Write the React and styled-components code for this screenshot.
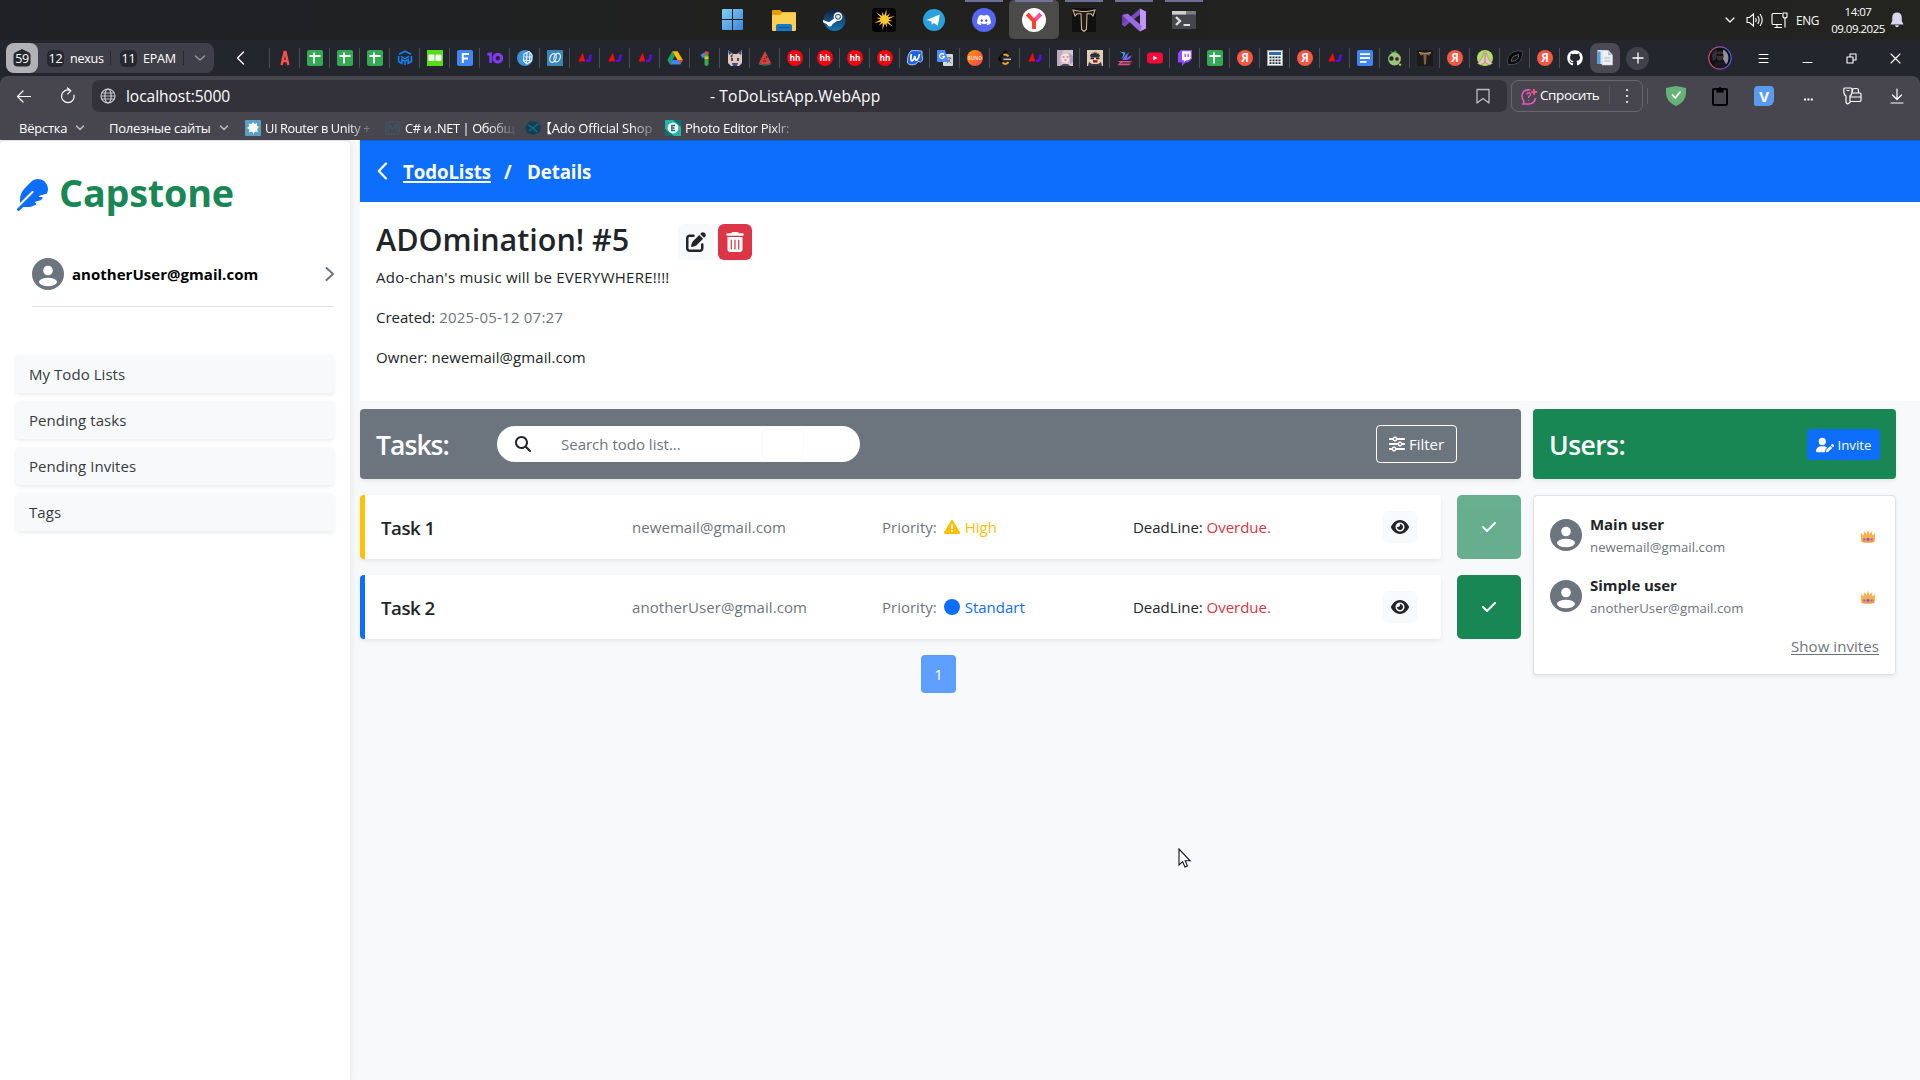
import React from "react";
import styled, { createGlobalStyle, css } from "styled-components";
import {
  FaFeather,
  FaPenToSquare,
  FaTrashCan,
  FaSliders,
  FaEye,
  FaCheck,
  FaUserPen,
  FaTriangleExclamation,
  FaCircle,
  FaMagnifyingGlass,
  FaDiscord,
  FaGithub,
} from "react-icons/fa6";

const FONT = `"Open Sans", "Noto Sans", "Noto Sans CJK JP", sans-serif`;

const Global = createGlobalStyle`
  * { box-sizing: border-box; }
  html, body { margin: 0; padding: 0; }
  body { font-family: ${FONT}; font-size: 15px; line-height: 24px; color: #212529; background: #f8f9fa; overflow: hidden; }
  svg { display: block; flex: none; }
  button { font-family: inherit; border: 0; padding: 0; }
`;

const Screen = styled.div`
  width: 1920px;
  height: 1080px;
  display: flex;
  flex-direction: column;
  overflow: hidden;
`;

/* ---------- system taskbar ---------- */

const Taskbar = styled.div`
  height: 40px;
  flex: none;
  display: flex;
  background: linear-gradient(90deg, #202126, #20211f 40%, #232420);
  padding-left: 707px;
  color: #fff;
`;

const AppCell = styled.div`
  width: 50px;
  height: 39px;
  display: flex;
  align-items: center;
  justify-content: center;
  border-radius: 5px;
  padding-top: 1px;
  ${(p) =>
    p.$first &&
    css`
      width: 52px;
      padding: 0 1px 0 0;
    `}
  ${(p) =>
    p.$running &&
    css`
      background: linear-gradient(#72709b, #72709b) center top / 38px 2px no-repeat;
    `}
  ${(p) => p.$active && "background-color: #4b4b4a;"}
`;

const Tray = styled.div`
  margin-left: auto;
  padding-right: 16px;
  display: flex;
  align-items: center;
  font-size: 12px;
`;

const TrayIcon = styled.span`
  margin-right: ${(p) => p.$gap || 0}px;
`;

const Lang = styled.span`
  width: 34px;
  font-size: 11.8px;
  letter-spacing: -0.3px;
`;

const Clock = styled.div`
  width: 56px;
  margin-right: 4px;
  text-align: center;
  font-size: 11.5px;
  line-height: 17px;
  letter-spacing: -0.5px;
  white-space: nowrap;
`;

/* ---------- browser chrome ---------- */

const TabStrip = styled.div`
  height: 36px;
  flex: none;
  background: #24262e;
  display: flex;
  align-items: center;
  padding-left: 6px;
  color: #fff;
`;

const GroupBox = styled.div`
  width: 208px;
  height: 30px;
  flex: none;
  border-radius: 8px;
  background: #3f3f49;
  display: flex;
  align-items: center;
  font-size: 12.6px;
  letter-spacing: -0.3px;
`;

const GroupHome = styled.div`
  width: 32px;
  height: 30px;
  flex: none;
  border-radius: 8px;
  background: #b2b2b6;
  display: flex;
  align-items: center;
  justify-content: center;
`;

const CountBadge = styled.span`
  width: 17px;
  height: 17px;
  flex: none;
  border-radius: 5px;
  background: #262830;
  line-height: 17px;
  text-align: center;
  margin-right: 6px;
`;

const GroupTab = styled.div`
  display: flex;
  flex: none;
  align-items: center;
  width: 64px;
  height: 14px;
  margin-left: 9px;
  line-height: 17px;
  border-right: 1px solid #27282f;
`;

const GroupMore = styled.div`
  padding-left: 10px;
`;

const BackCell = styled.div`
  width: 56px;
  flex: none;
  padding-left: 22px;
`;

const Tab = styled.div`
  width: 30px;
  height: ${(p) => (p.$active ? 30 : 20)}px;
  flex: none;
  display: flex;
  align-items: center;
  justify-content: center;
  box-shadow: ${(p) => (p.$active ? "none" : "-1px 0 0 #4b4c54")};
  background: ${(p) => (p.$active ? "#4a4954" : "transparent")};
  border-radius: ${(p) => (p.$active ? "8px" : "0")};
`;

const PlusButton = styled.div`
  width: 23px;
  height: 23px;
  margin-left: 6px;
  border-radius: 50%;
  background: #41414b;
  display: flex;
  align-items: center;
  justify-content: center;
`;

const WindowControls = styled.div`
  margin-left: auto;
  display: flex;
  padding-right: 3px;
`;

const ControlCell = styled.div`
  width: ${(p) => p.$w || 44}px;
  display: flex;
  align-items: center;
  justify-content: center;
`;

const ProfileCell = styled(ControlCell)`
  width: 24px;
  margin-right: 9px;
`;

const ToolbarArea = styled.div`
  height: 64px;
  flex: none;
  background: #47464f;
  color: #fff;
  border-radius: 8px 8px 0 0;
  box-shadow: 0 -8px 0 8px #24262e;
  clip-path: inset(-1px 0 0 0);
`;

const AddressRow = styled.div`
  display: flex;
  align-items: center;
  height: 36px;
  padding-top: 4px;
`;

const NavCell = styled.div`
  width: ${(p) => p.$w}px;
  display: flex;
  padding-left: ${(p) => p.$pl}px;
`;

const AddressField = styled.div`
  width: 1415px;
  height: 32px;
  border-radius: 7px;
  background: #33323b;
  display: grid;
  grid-template-columns: 26px 584px 1fr 31px;
  align-items: center;
  padding-left: 8px;
  font-size: 15.6px;
  letter-spacing: -0.07px;
  white-space: nowrap;
`;

const PageTitle = styled.span`
  letter-spacing: 0.15px;
`;

const AskButton = styled.div`
  width: 132px;
  height: 32px;
  margin-left: 4px;
  border: 1px solid #67666f;
  border-radius: 7px;
  display: flex;
  align-items: center;
  padding-left: 9px;
  font-size: 13.5px;
  letter-spacing: -0.4px;
`;

const AskText = styled.span`
  width: 70px;
  margin: 0 0 2px 3px;
  border-right: 1px solid #5a5963;
  line-height: 18px;
`;

const Dots = styled.div`
  margin-left: 16px;
  width: 2px;
  height: 14px;
  background: repeating-linear-gradient(#d5d5d8 0 2px, transparent 2px 6px);
`;

const VLine = styled.div`
  width: 1px;
  height: 16px;
  margin-left: 4px;
  background: #66656f;
`;

const Extensions = styled.div`
  display: flex;
  align-items: center;
  margin-left: 6px;
`;

const VBadge = styled.div`
  width: 20px;
  height: 20px;
  border-radius: 4px 4px 6px 2px;
  background: #5a9bee;
  font-weight: 700;
  font-size: 15px;
  line-height: 20px;
  text-align: center;
`;

const BookmarkRow = styled.div`
  height: 28px;
  display: grid;
  grid-template-columns: 90px 136px 140px 140px 140px 150px;
  align-items: center;
  padding: 4px 0 0 19px;
  font-size: 13px;
  letter-spacing: -0.25px;
  white-space: nowrap;
  line-height: 20px;
`;

const Bookmark = styled.div`
  display: flex;
  align-items: center;
  gap: ${(p) => (p.$gap === undefined ? 8 : p.$gap)}px;
`;

const FadeText = styled.span`
  width: ${(p) => p.$w}px;
  font-size: ${(p) => p.$fs || 12.8}px;
  letter-spacing: ${(p) => p.$ls || -0.4}px;
  text-indent: ${(p) => p.$indent || 0}px;
  mask-image: linear-gradient(90deg, #000 ${(p) => p.$w - 28}px, transparent ${(p) => p.$w}px);
`;

/* ---------- page ---------- */

const Page = styled.div`
  flex: 1;
  display: flex;
  background: #f8f9fa;
`;

const Sidebar = styled.aside`
  width: 350px;
  background: #fff;
  border-radius: 4px 4px 0 0;
  box-shadow: inset 0 1px 0 rgba(0, 0, 0, 0.12), 0 2px 8px rgba(0, 0, 0, 0.1);
  padding: 33px 16px 0;
`;

const Brand = styled.div`
  height: 42px;
  display: flex;
  align-items: flex-start;
  gap: 11px;
  color: #0d6efd;
  > svg { margin-top: 6px; }
`;

const BrandName = styled.span`
  font-size: 37.8px;
  line-height: 40px;
  font-weight: 700;
  color: #198754;
  letter-spacing: -0.2px;
`;

const Account = styled.div`
  margin: 43px 0 0 16px;
  height: 49px;
  display: flex;
  border-bottom: 1px solid #dee2e6;
  font-weight: 700;
  color: #000;
`;

const AccountArrow = styled.span`
  margin: 8px -1px 0 auto;
`;

const AccountName = styled.span`
  margin-left: 8px;
  line-height: 32px;
  letter-spacing: 0.03px;
`;

const NavList = styled.nav`
  margin-top: 48px;
  display: flex;
  flex-direction: column;
  gap: 8px;
`;

const NavItem = styled.div`
  height: 38px;
  border-radius: 4px;
  background: #f8f9fa;
  box-shadow: 0 2px 4px rgba(0, 0, 0, 0.075);
  padding-left: 13px;
  line-height: 39px;
  letter-spacing: 0.05px;
  color: #373b3e;
`;

const Main = styled.main`
  flex: 1;
  margin-left: 10px;
  display: flex;
  flex-direction: column;
`;

const Crumbs = styled.div`
  height: 62px;
  background: #0d6efd;
  box-shadow: inset 0 1px 0 rgba(0, 0, 0, 0.12), 0 1px 2px rgba(0, 0, 0, 0.12);
  color: #fff;
  display: flex;
  align-items: center;
  padding: 2px 0 0 17px;
  font-weight: 700;
  font-size: 18.7px;
  > svg { margin-top: -2px; }
`;

const CrumbLink = styled.a`
  margin-left: 15px;
  width: 101px;
  letter-spacing: -0.1px;
  text-decoration: underline;
  text-decoration-thickness: 2px;
  text-underline-offset: 2px;
`;

const Crumb = styled.span`
  width: 23px;
  letter-spacing: -0.1px;
`;

const Intro = styled.section`
  height: 199px;
  background: #fff;
  padding: 22px 16px 0;
`;

const TitleRow = styled.div`
  height: 36px;
  display: flex;
`;

const Title = styled.h2`
  margin: 0;
  width: 302px;
  font-size: 30.5px;
  line-height: 30px;
  font-weight: 600;
  letter-spacing: 0;
  white-space: nowrap;
`;

const IconButton = styled.button`
  width: ${(p) => p.$w}px;
  height: ${(p) => p.$h || 36}px;
  margin-right: 4px;
  border-radius: 6px;
  display: flex;
  align-items: center;
  justify-content: center;
  background: ${(p) => p.$bg || "#f8f9fa"};
  color: ${(p) => p.$fg || "#212529"};
`;

const Line = styled.p`
  margin: ${(p) => p.$mt}px 0 0;
  line-height: 24px;
  letter-spacing: ${(p) => p.$ls || 0}px;
`;

const Muted = styled.span`
  color: #6c757d;
  letter-spacing: ${(p) => p.$ls || 0}px;
`;

const Columns = styled.div`
  display: grid;
  grid-template-columns: 1161px 363px;
  column-gap: 12px;
  padding-top: 8px;
`;

const PanelHead = styled.div`
  height: 70px;
  border-radius: 4px;
  background: ${(p) => p.$bg};
  color: #fff;
  box-shadow: 0 2px 4px rgba(0, 0, 0, 0.075);
  display: flex;
  align-items: center;
  padding-left: 16px;
`;

const PanelTitle = styled.h3`
  margin: 0;
  padding-top: 2px;
  width: 121px;
  font-size: 26.5px;
  line-height: 34px;
  font-weight: 600;
  letter-spacing: ${(p) => p.$ls}px;
`;

const SearchBox = styled.div`
  width: 363px;
  height: 36px;
  border-radius: 18px;
  background: #fff;
  display: flex;
  align-items: center;
  padding-left: 18px;
  color: #212529;
`;

const SearchHint = styled.span`
  width: 201px;
  margin-left: 30px;
  color: #6c757d;
  letter-spacing: 0;
`;

const ClearSlot = styled.span`
  width: 42px;
  height: 30px;
  border: 1px solid #f8f9fa;
  border-radius: 4px;
`;

const FilterButton = styled.button`
  margin: 0 64px 0 auto;
  width: 81px;
  height: 38px;
  border: 1px solid #fff;
  border-radius: 4px;
  background: transparent;
  color: #fff;
  display: flex;
  align-items: center;
  justify-content: center;
  gap: 4px;
  font-size: 15px;
`;

const TaskRow = styled.div`
  margin-top: 16px;
  display: flex;
  justify-content: space-between;
`;

const TaskCard = styled.div`
  width: 1081px;
  height: 64px;
  border-left: 5px solid ${(p) => p.$accent};
  border-radius: 4px;
  background: #fff;
  box-shadow: 0 2px 4px rgba(0, 0, 0, 0.075);
  display: grid;
  grid-template-columns: 251px 250px 251px 250px 34px;
  align-items: center;
  padding-left: 16px;
`;

const TaskName = styled.span`
  padding-top: 1px;
  font-size: 18.7px;
  font-weight: 600;
  letter-spacing: -0.5px;
`;

const Priority = styled.span`
  display: flex;
  align-items: center;
  color: ${(p) => p.$color};
  svg { margin: -1px 5px 0 7px; }
`;

const Overdue = styled.span`
  color: #dc3545;
`;

const Deadline = styled.span`
  letter-spacing: -0.03px;
`;

const DoneButton = styled.button`
  width: 64px;
  height: 64px;
  border-radius: 5px;
  background: #198754;
  opacity: ${(p) => (p.disabled ? 0.65 : 1)};
  color: #fff;
  display: flex;
  align-items: center;
  justify-content: center;
`;

const Pager = styled.div`
  margin: 16px 0 0 561px;
  width: 35px;
  height: 38px;
  border-radius: 4px;
  background: #5e9efe;
  color: #fff;
  line-height: 38px;
  text-align: center;
`;

const InviteButton = styled.button`
  margin: 1px 16px 0 auto;
  width: 73px;
  height: 31px;
  border-radius: 4px;
  background: #0d6efd;
  color: #fff;
  display: flex;
  align-items: center;
  justify-content: center;
  gap: 4px;
  font-size: 13.2px;
`;

const UsersCard = styled.div`
  margin-top: 16px;
  height: 180px;
  border: 1px solid #dee2e6;
  border-radius: 4px;
  background: #fff;
  box-shadow: 0 2px 4px rgba(0, 0, 0, 0.075);
  padding: 16px 16px 0 16px;
`;

const UserRow = styled.div`
  height: 45px;
  margin-bottom: 16px;
  display: flex;
  align-items: center;
`;

const OwnerMark = styled.span`
  margin: 3px 3px 0 auto;
`;

const UserText = styled.div`
  margin: 2px 0 0 8px;
`;

const UserName = styled.div`
  line-height: 23px;
  font-weight: 700;
  letter-spacing: -0.05px;
`;

const UserMail = styled.div`
  line-height: 22px;
  font-size: 13.2px;
  letter-spacing: 0.04px;
  color: #6c757d;
`;

const InvitesLink = styled.div`
  text-align: right;
  color: #6c757d;
  letter-spacing: 0.07px;
  text-decoration: underline;
  text-underline-offset: 2px;
`;

const CursorMark = styled.svg`
  position: absolute;
  left: 1178px;
  top: 848px;
`;

/* ---------- small drawings ---------- */

const Avatar = () => (
  <svg width="32" height="32" viewBox="0 0 32 32">
    <circle cx="16" cy="16" r="16" fill="#6c757d" />
    <circle cx="16" cy="12.5" r="4.8" fill="#fff" />
    <ellipse cx="16" cy="24" rx="9" ry="4.2" fill="#fff" />
  </svg>
);

const Crown = () => (
  <svg width="16" height="14" viewBox="0 0 16 14">
    <path d="M0.5 3.5 L3.4 6.4 L4.6 2 L6.6 5.6 L8 0.4 L9.4 5.6 L11.4 2 L12.6 6.4 L15.5 3.5 L14.2 13 Q8 14 1.8 13Z" fill="#f9b04e" />
    <path d="M1.4 9 Q8 10.3 14.6 9 L14.2 13 Q8 14 1.8 13Z" fill="#ee9a55" />
    <circle cx="4.3" cy="10.4" r="0.9" fill="#e0436a" />
    <circle cx="8" cy="10.2" r="1.5" fill="#4a6ff0" />
    <circle cx="11.7" cy="10.4" r="0.9" fill="#e0436a" />
  </svg>
);

const Stroke = ({ w, h, d, color = "#fff", sw = 1.3 }) => (
  <svg width={w} height={h} viewBox={`0 0 ${w} ${h}`} fill="none" stroke={color} strokeWidth={sw}>
    <path d={d} strokeLinecap="round" strokeLinejoin="round" />
  </svg>
);

const Down = () => <Stroke w={10} h={8} d="M1.5 2 L5 5.5 L8.5 2" color="#c3c3c8" />;

const Glyph = ({ children, size = 16 }) => (
  <svg width={size} height={size} viewBox="0 0 16 16">
    {children}
  </svg>
);

const Letter = ({ x = 8, y = 12, size = 10, fill = "#fff", children }) => (
  <text x={x} y={y} fontSize={size} fill={fill} fontWeight="700" textAnchor="middle" fontFamily={FONT}>
    {children}
  </text>
);

const icons = {
  A: (
    <Glyph>
      <path d="M4.6 15 L7.6 2 H8.4 L11.4 15 M5.8 11 H10.2" fill="none" stroke="#f9504f" strokeWidth="2.5" />
    </Glyph>
  ),
  sheet: (
    <Glyph>
      <rect width="16" height="16" rx="2" fill="#34a853" />
      <path d="M2.5 6 H13.5 M7 2.5 V13.5" stroke="#fff" strokeWidth="1.8" />
    </Glyph>
  ),
  cube: (
    <Glyph>
      <path d="M2 4.2 L8 1.2 L14 4.2 M1.6 6 V11.5 L4.8 13.4 V9.4 L8 11.4 L11.2 9.4 V13.4 L14.4 11.5 V6 M4 6.4 L8 8.6 L12 6.4 M8 11.4 V15" fill="none" stroke="#1182f7" strokeWidth="1.6" />
    </Glyph>
  ),
  green: (
    <Glyph>
      <rect width="16" height="16" fill="#56da1a" />
      <rect x="1.5" y="4.5" width="6" height="6.5" rx="1" fill="#f3fff0" />
      <rect x="8.5" y="4.5" width="6" height="6.5" rx="1" fill="#f3fff0" />
    </Glyph>
  ),
  F: (
    <Glyph>
      <rect width="16" height="16" rx="2" fill="#4285f4" />
      <path d="M5.8 13 V4 H12 M5.8 8.4 H11" fill="none" stroke="#fff" strokeWidth="2" />
    </Glyph>
  ),
  io: (
    <Glyph>
      <path d="M0.3 4.6 L3.6 3.8 V13" fill="none" stroke="#8239f4" strokeWidth="2.6" />
      <circle cx="10.8" cy="8.2" r="3.8" fill="none" stroke="#8239f4" strokeWidth="3.2" />
    </Glyph>
  ),
  globe: (
    <Glyph>
      <circle cx="8" cy="8" r="8" fill="#3f91d8" />
      <path d="M7 4 L12 1.5 L15 5 L14.5 11 L10 14 L6.5 11Z M8 7 L15 7 M7 10 L14 11 M10 2.5 L9.5 13.5 M13 3 L12.5 12.5" fill="none" stroke="#e8f2fb" strokeWidth="1.1" />
    </Glyph>
  ),
  teal: (
    <Glyph>
      <rect width="16" height="16" fill="#3a87b5" />
      <ellipse cx="6" cy="8" rx="3" ry="4.5" fill="none" stroke="#e9f4fa" strokeWidth="1.2" transform="rotate(20 6 8)" />
      <ellipse cx="10" cy="7.6" rx="3" ry="4.5" fill="none" stroke="#e9f4fa" strokeWidth="1.2" transform="rotate(20 10 8)" />
    </Glyph>
  ),
  aj: (
    <Glyph>
      <path d="M2.6 11.5 L5.4 5.8 L7 11.5 M3.6 9.8 H7" fill="none" stroke="#f50a14" strokeWidth="2.4" />
      <path d="M13.6 4.6 L13 9 Q12.2 11.4 9.2 10.6" fill="none" stroke="#5a0cf0" strokeWidth="2.6" />
    </Glyph>
  ),
  drive: (
    <Glyph>
      <path d="M5.3 1.2 L8 6 L3 14.5 L0.4 10Z" fill="#1ea362" />
      <path d="M5.3 1.2 H10.7 L15.8 10 H10.4Z" fill="#fbbc04" />
      <path d="M3 14.5 L5.6 10 H15.8 L13.2 14.5Z" fill="#4285f4" />
      <path d="M11.5 10 H15.8 L13.4 14.2Z" fill="#ea4335" />
      <path d="M8 6.2 L10.2 10 H5.8Z" fill="#24262e" />
    </Glyph>
  ),
  one: (
    <Glyph>
      <path d="M4.6 6.6 L8.5 4" stroke="#4285f4" strokeWidth="4" />
      <path d="M9.5 4 V14" stroke="#34a853" strokeWidth="4" strokeLinecap="round" />
      <path d="M9.5 6.5 V9" stroke="#fbbc04" strokeWidth="4" />
      <path d="M8 2.6 L11.4 3.4" stroke="#ea4335" strokeWidth="3.4" />
    </Glyph>
  ),
  cat: (
    <Glyph>
      <path d="M1 0 L6 4 H10 L15 0 L15 13 L12 16 H4 L1 13Z" fill="#dcc8bd" />
      <path d="M1 0 L5 3 L2 5Z M15 0 L11 3 L14 5Z M3 6 L6 4 L5 8Z" fill="#3c4682" />
      <rect x="4" y="8" width="2" height="3" fill="#713c52" />
      <rect x="10" y="8" width="2" height="3" fill="#713c52" />
      <path d="M5 13 H11 L10 16 H6Z" fill="#384a91" />
    </Glyph>
  ),
  melon: (
    <Glyph>
      <path d="M8 1 L14 13 Q8 16 2 13Z" fill="#d4403f" />
      <path d="M2 13 Q8 16 14 13 L14.3 14.3 Q8 17 1.7 14.3Z" fill="#3d7c3c" />
      <path d="M7 8 L8 9 M10 8 L9 6 M6 11 L9 11" stroke="#4b1a1a" strokeWidth="1" />
    </Glyph>
  ),
  hh: (
    <Glyph><circle cx="8" cy="8" r="8" fill="#f5050b" /><Letter y={11.3} size={8.5}>hh</Letter></Glyph>
  ),
  W: (
    <Glyph>
      <path d="M4 0.8 Q9 0 15 1.2 Q14.6 5 15.8 10 Q13.5 13.6 11 11.4 L9 14 Q3 16 0.5 13 Q0 5 4 0.8Z" fill="#1d62e3" stroke="#bcd3fa" strokeWidth="0.9" />
      <path d="M4.4 4 Q3 11 5 11 Q7 10 8 6 Q8 11 10 10 Q12 8 12.5 4" fill="none" stroke="#fff" strokeWidth="1.7" />
    </Glyph>
  ),
  translate: (
    <Glyph>
      <rect x="6" y="4" width="10" height="12" rx="1" fill="#d5d8dc" />
      <path d="M9.5 8 H14.5 M12 7 V8 M13.5 8 Q12.5 11.5 9.8 13 M10.6 9 Q12 12 14.4 13" stroke="#5f7076" strokeWidth="0.9" fill="none" />
      <path d="M1 0 H8 L11.5 12 H1 Q0 12 0 11 V1 Q0 0 1 0Z" fill="#4d8df5" />
      <path d="M7 4.6 A2.4 2.4 0 1 0 7.4 6.6 H5.4" stroke="#fff" strokeWidth="1.1" fill="none" />
    </Glyph>
  ),
  suno: (
    <Glyph>
      <defs>
        <linearGradient id="suno" x1="0" y1="0" x2="1" y2="1">
          <stop offset="0" stopColor="#ff9a05" />
          <stop offset="1" stopColor="#fb3d4e" />
        </linearGradient>
      </defs>
      <circle cx="8" cy="8" r="8" fill="url(#suno)" />
      <Letter y={9.8} size={4.8} fill="#ffd9c4">SUNO</Letter>
    </Glyph>
  ),
  leet: (
    <Glyph>
      <path d="M9.5 1 L3 7.2 Q1.8 8.6 3 10 L6.5 13.5" fill="none" stroke="#050505" strokeWidth="2" />
      <path d="M6.4 4.8 Q9 3.6 11.6 6.4 M5.5 12.4 Q8.5 15.6 11.6 12.2" fill="none" stroke="#f6a31c" strokeWidth="2" />
      <path d="M6.5 9.3 H14" stroke="#bdbdbd" strokeWidth="1.5" />
    </Glyph>
  ),
  pink: (
    <Glyph>
      <rect width="16" height="16" fill="#d8c3d0" />
      <circle cx="8.5" cy="8" r="4.5" fill="#f6dfdd" />
      <path d="M0 0 H7 L3 7 L4 16 H0Z" fill="#bfa9c0" />
      <path d="M12 3 L16 6 V12 L13 14Z" fill="#a9a0b9" />
      <path d="M3 16 L6 14 H11 L13 16Z" fill="#4b4c62" />
      <path d="M5.5 7 H7.5 M9.5 7 H11.5" stroke="#9c5f78" strokeWidth="1" />
      <path d="M7.5 10 H9.5" stroke="#c24f59" strokeWidth="1" />
    </Glyph>
  ),
  knight: (
    <Glyph>
      <rect width="16" height="16" fill="#e0cfae" />
      <path d="M3 5.5 Q8 -2 13 5.5 L12 7.5 H4Z" fill="#2b2d42" />
      <path d="M5 3.5 L8 2 L11 3.5" stroke="#c9b48d" strokeWidth="1" fill="none" />
      <path d="M3 8 H13 L12 13 H4Z" fill="#f1dcc4" />
      <path d="M3.5 8.5 H7 M9 8.5 H12.5" stroke="#1e1f30" strokeWidth="1.6" />
      <rect x="6" y="10" width="4.5" height="2.6" fill="#a71f25" />
      <path d="M1 16 L2 12 L5 14 H11 L14 12 L15 16Z" fill="#3a3444" />
    </Glyph>
  ),
  sail: (
    <Glyph>
      <path d="M2.5 1.5 L8.5 2.5 Q8 6 4 9.5 Q7 5 6 3.6Z" fill="#4aa5f0" />
      <path d="M5.5 10 Q7 5 12.5 2 Q10 5 10 8 L14.5 5 Q14 9 10 10Z" fill="#6e6af0" />
      <path d="M1 11 H15.5 L13 12.6 H6 L3 13.6 H14.5 L12 15.2 H0.5 L3 12.6Z" fill="#e74a8a" />
    </Glyph>
  ),
  youtube: (
    <Glyph>
      <rect y="2.5" width="16" height="11" rx="3" fill="#fb0a39" />
      <path d="M6.3 5.8 L10.5 8 L6.3 10.2Z" fill="#fff" />
    </Glyph>
  ),
  twitch: (
    <Glyph>
      <path d="M4 0 H15 V9 L11 12.5 H8.5 L5 16 V12.5 H1 V3Z" fill="#9147ff" />
      <path d="M5 1.3 H13.8 V8.3 L11.6 10.3 H9.2 L7.2 12 V10.3 H5Z" fill="#fff" />
      <path d="M8.2 3.7 V7 M11.2 3.7 V7" stroke="#9147ff" strokeWidth="1.3" />
    </Glyph>
  ),
  ya: (
    <Glyph><circle cx="8" cy="8" r="8" fill="#fb5741" /><Letter y={12.2} size={11.5}>Я</Letter></Glyph>
  ),
  table: (
    <Glyph>
      <rect x="0.5" y="0.5" width="15" height="15" fill="#f4f4f4" stroke="#9aa0a6" />
      <rect x="2" y="2" width="12" height="3" fill="#2f6ca8" />
      <path d="M2.5 7.3 H14 M2.5 10.3 H14 M2.5 13.2 H14" stroke="#27303a" strokeWidth="1.7" strokeDasharray="2 1" />
    </Glyph>
  ),
  docs: (
    <Glyph>
      <rect width="16" height="16" rx="2" fill="#4285f4" />
      <path d="M3 4.2 H13 M3 8 H13 M3 11.8 H9.5" stroke="#fff" strokeWidth="1.8" />
    </Glyph>
  ),
  turtle: (
    <Glyph>
      <path d="M3 1 L6 2 L9 0.5 L10 3.5 H5Z" fill="#3d9a31" />
      <circle cx="7.5" cy="9" r="6.4" fill="#94c779" />
      <circle cx="4.4" cy="8.5" r="2.2" fill="#23301f" />
      <circle cx="10" cy="9" r="2.3" fill="#23301f" stroke="#e0a49a" strokeWidth="0.9" />
      <circle cx="13" cy="14.6" r="1.2" fill="#a7dd53" />
    </Glyph>
  ),
  T: (
    <Glyph>
      <rect width="16" height="16" fill="#1b1b1c" />
      <path d="M2 2.5 L7 3.5 H9 L14 2.5 L12.5 5.5 L9.6 4.8 L9 14.5 H7 L6.4 4.8 L3.5 5.5Z" fill="#80603f" />
      <path d="M2 2.5 L7 3.3 H9 L14 2.5" fill="none" stroke="#cbb28c" strokeWidth="0.9" />
    </Glyph>
  ),
  pray: (
    <Glyph>
      <circle cx="8" cy="8" r="8" fill="#b4dd67" />
      <path d="M7.4 1.6 L8.6 1.6 L11.4 8.5 L15.4 13.5 L12.5 15 L8 12.5 L3.5 15 L0.6 13.5 L4.6 8.5Z" fill="#e3cbb8" stroke="#93806e" strokeWidth="0.6" />
      <path d="M8 3 V12.5" stroke="#7f6b66" strokeWidth="0.7" />
    </Glyph>
  ),
  leaf: (
    <Glyph>
      <path d="M1 14.5 Q-1 5 6 2 Q10 0.5 15.3 1.2 Q16 10 10 13.5 Q6 15 1 14.5Z" fill="#0a0a0b" stroke="#5a5b60" strokeWidth="0.7" />
      <path d="M4.5 11.5 Q3.5 6.5 11.5 4.5 Q12.5 10.5 4.5 11.5Z" fill="#17181b" stroke="#72737a" strokeWidth="0.8" />
    </Glyph>
  ),
  github: <FaGithub size={16} color="#fff" />,
  page: (
    <Glyph>
      <path d="M0.5 0 H10 V14 H0.5Z" fill="#dcebf4" />
      <rect x="0.5" y="1.5" width="3" height="12.5" fill="#4f9fd0" />
      <path d="M5 0.5 H11.5 L15.5 5 V15 H5Z" fill="#eef2f6" stroke="#c5cdd5" strokeWidth="0.6" />
      <path d="M11 0.8 L15 5.3 H11Z" fill="#b6c1ca" />
      <path d="M7 8 H13.5 M7 11 H13.5" stroke="#c3ccd4" strokeWidth="1.4" />
    </Glyph>
  ),
};

const TABS = [
  "A", "sheet", "sheet", "sheet", "cube", "green", "F", "io", "globe", "teal",
  "aj", "aj", "aj", "drive", "one", "cat", "melon", "hh", "hh", "hh", "hh", "W",
  "translate", "suno", "leet", "aj", "pink", "knight", "sail", "youtube", "twitch",
  "sheet", "ya", "table", "ya", "aj", "docs", "turtle", "T", "ya", "pray", "leaf",
  "ya", "github", "page",
];

const rays = Array.from({ length: 12 }, (_, i) => {
  const a = (i * Math.PI) / 6 + 0.2;
  const r = i % 2 ? 11 : 8.5;
  const p = (t, q) => `${12.5 + Math.cos(t) * q} ${11.5 + Math.sin(t) * q}`;
  return `M${p(a - 0.4, 3)} L${p(a, r)} L${p(a + 0.4, 3)}Z`;
}).join(" ");

const S24 = ({ children }) => (
  <svg width="24" height="24" viewBox="0 0 24 24">{children}</svg>
);

const apps = [
  {
    id: "start",
    icon: (
      <svg width="21" height="21" viewBox="0 0 21 21">
        <defs>
          <linearGradient id="win" x1="0" y1="0" x2="1" y2="1">
            <stop offset="0" stopColor="#82cff8" />
            <stop offset="1" stopColor="#3e86d6" />
          </linearGradient>
        </defs>
        <path d="M1 0H10V10H0V1Q0 0 1 0Z M11 0H20Q21 0 21 1V10H11Z M0 11H10V21H1Q0 21 0 20Z M11 11H21V20Q21 21 20 21H11Z" fill="url(#win)" />
      </svg>
    ),
  },
  {
    id: "files",
    icon: (
      <S24>
        <path d="M0 3 Q0 2 1 2 H8 L10 4 H23 Q24 4 24 5 V10 H0Z" fill="#e69d0c" />
        <path d="M0 7 H8 L10.5 4.5 H23 Q24 4.5 24 5.5 V22 Q24 23 23 23 H1 Q0 23 0 22Z" fill="#fcd054" />
        <path d="M4 23 V18 Q4 16 6 16 H18 Q20 16 20 18 V23Z" fill="#1577c8" />
        <path d="M7 19.5 H17" stroke="#0b4f93" strokeWidth="1" />
      </S24>
    ),
  },
  {
    id: "steam",
    icon: (
      <S24>
        <defs>
          <linearGradient id="stm" x1="0" y1="0" x2="0" y2="1">
            <stop offset="0" stopColor="#14203f" />
            <stop offset="1" stopColor="#1377b5" />
          </linearGradient>
        </defs>
        <circle cx="12.5" cy="12" r="11" fill="url(#stm)" />
        <circle cx="16" cy="8.7" r="3.6" fill="none" stroke="#fff" strokeWidth="1.6" />
        <circle cx="16" cy="8.7" r="2" fill="#dfe7ee" />
        <path d="M1 12 L7 14.2 L12 10.6 L15.2 13 L10.6 16 Q9.6 19.4 6.6 18.2 L4.6 16 L1.2 14.6Z" fill="#fff" />
      </S24>
    ),
  },
  {
    id: "burst",
    icon: (
      <S24>
        <rect width="24" height="24" rx="4" fill="#000" />
        <circle cx="12.5" cy="11.5" r="4.2" fill="#f8c72c" />
        <path d={rays} fill="#f8c72c" />
      </S24>
    ),
  },
  {
    id: "telegram",
    icon: (
      <S24>
        <circle cx="12" cy="12" r="11" fill="#2ba0dc" />
        <path d="M4.5 12 L17.8 6.6 L15.8 17.8 L11.8 14.9 L9.8 16.8 L9.4 13.4Z" fill="#fff" />
      </S24>
    ),
  },
  {
    id: "discord",
    running: true,
    icon: (
      <S24>
        <circle cx="12" cy="12" r="12" fill="#5865f2" />
        <g transform="translate(4.5 4.6)"><FaDiscord size={15} color="#fff" /></g>
      </S24>
    ),
  },
  {
    id: "yandex",
    running: true,
    active: true,
    icon: (
      <S24>
        <circle cx="12" cy="12" r="12" fill="#fff" />
        <path d="M12 13 L18.8 6" fill="none" stroke="#f94fa0" strokeWidth="4" />
        <path d="M5.2 6 L12 13 V21" fill="none" stroke="#f8432d" strokeWidth="4" />
      </S24>
    ),
  },
  {
    id: "T",
    running: true,
    icon: (
      <S24>
        <rect width="24" height="24" fill="#101010" />
        <path d="M1 2 L9 3.5 H15 L23 2 L21 8 L19 5.8 L15 5.8 L14.4 21.5 L12 23.5 L9.6 21.5 L9 5.8 L5 5.8 L3 8Z" fill="#1d1a17" stroke="#cfb591" strokeWidth="1.1" />
      </S24>
    ),
  },
  {
    id: "vs",
    running: true,
    icon: (
      <S24>
        <path d="M0 7.5 L2.5 5.5 L5 7 V17 L2.5 18.5 L0 16.5Z" fill="#6a3ea8" />
        <path d="M0 16.5 L18 0.5 V6.5 L2.5 18.5Z" fill="#7a4cc0" />
        <path d="M18 0.5 L24 3.5 V20.5 L18 23.5Z" fill="#c296f6" />
        <path d="M0.5 7.5 L5.5 5.5 L20 18 L18 23.5 L15 21Z" fill="#9a6be0" />
      </S24>
    ),
  },
  {
    id: "terminal",
    running: true,
    icon: (
      <S24>
        <rect y="3" width="24" height="18" rx="1" fill="#46474a" />
        <path d="M0 6.5 V4 Q0 3 1 3 H23 Q24 3 24 4 V6.5Z" fill="#7c7d80" />
        <rect x="0" y="3" width="14" height="3.5" fill="#cfcfd1" />
        <path d="M4 9 L8 13 L4 17" fill="none" stroke="#dcdcdc" strokeWidth="2.4" />
        <path d="M11.5 17 H18" stroke="#f2f2f2" strokeWidth="1.8" />
      </S24>
    ),
  },
];

const NAV = ["My Todo Lists", "Pending tasks", "Pending Invites", "Tags"];

const TASKS = [
  { name: "Task 1", mail: "newemail@gmail.com", accent: "#ffc107", label: "High", Icon: FaTriangleExclamation, done: true },
  { name: "Task 2", mail: "anotherUser@gmail.com", accent: "#0d6efd", label: "Standart", Icon: FaCircle, done: false },
];

const USERS = [
  { name: "Main user", mail: "newemail@gmail.com" },
  { name: "Simple user", mail: "anotherUser@gmail.com" },
];

function SystemBar() {
  return (
    <Taskbar>
      {apps.map((a, i) => (
        <AppCell key={a.id} $running={a.running} $active={a.active} $first={i === 0}>
          {a.icon}
        </AppCell>
      ))}
      <Tray>
        <TrayIcon $gap={11}>
          <Stroke w={10} h={8} d="M1 2 L5 6 L9 2" />
        </TrayIcon>
        <TrayIcon $gap={7}>
          <svg width="18" height="16" viewBox="0 0 18 16" fill="none" stroke="#fff" strokeWidth="1.1">
            <path d="M1 5.5 H3.5 L7.5 2 V14 L3.5 10.5 H1Z M9.5 6 Q11 8 9.5 10 M11.7 4 Q14.5 8 11.7 12 M14 2 Q18.4 8 14 14" />
          </svg>
        </TrayIcon>
        <TrayIcon $gap={8}>
          <svg width="17" height="17" viewBox="0 0 17 17" fill="none" stroke="#fff" strokeWidth="1.1">
            <path d="M11 1.5 H2 Q1 1.5 1 2.5 V11 Q1 12.5 2 12.5 H11 M6 12.5 V15.5 M3.5 15.5 H11 M12 1 H16 V5 Q14 7 12 5Z M14 6 V15.5" />
          </svg>
        </TrayIcon>
        <Lang>ENG</Lang>
        <Clock>
          14:07
          <br />
          09.09.2025
        </Clock>
        <TrayIcon>
          <svg width="14" height="16" viewBox="0 0 14 16">
            <path d="M7 0.5 Q11.5 0.5 11.8 5.5 V9 L13.5 12.5 H0.5 L2.2 9 V5.5 Q2.5 0.5 7 0.5Z M5 13.3 H9 Q8.6 15.2 7 15.2 Q5.4 15.2 5 13.3Z" fill="#d9d6ee" />
          </svg>
        </TrayIcon>
      </Tray>
    </Taskbar>
  );
}

function Tabs() {
  return (
    <TabStrip>
      <GroupBox>
        <GroupHome>
          <svg width="20" height="20" viewBox="0 0 20 20">
            <path d="M10 1 L17 4.5 Q18.5 5.5 18.5 7 V14.5 Q18.5 18.5 14.5 18.5 H5.5 Q1.5 18.5 1.5 14.5 V7 Q1.5 5.5 3 4.5Z" fill="#262830" />
            <text x="10" y="14.6" fontSize="12.5" fill="#fff" textAnchor="middle" letterSpacing="-0.4">59</text>
          </svg>
        </GroupHome>
        <GroupTab><CountBadge>12</CountBadge>nexus</GroupTab>
        <GroupTab><CountBadge>11</CountBadge>EPAM</GroupTab>
        <GroupMore>
          <Stroke w={12} h={8} d="M1.5 2 L6 6 L10.5 2" color="#9d9da4" />
        </GroupMore>
      </GroupBox>
      <BackCell>
        <Stroke w={9} h={14} d="M7.5 1 L1.5 7 L7.5 13" />
      </BackCell>
      {TABS.map((name, i) => (
        <Tab key={i} $active={i === TABS.length - 1}>
          {icons[name]}
        </Tab>
      ))}
      <PlusButton>
        <Stroke w={12} h={12} d="M6 1 V11 M1 6 H11" />
      </PlusButton>
      <WindowControls>
        <ProfileCell>
          <svg width="24" height="24" viewBox="0 0 24 24">
            <defs>
              <linearGradient id="ring">
                <stop offset="0" stopColor="#e0485c" />
                <stop offset="1" stopColor="#4c55e8" />
              </linearGradient>
            </defs>
            <circle cx="12" cy="12" r="11.2" fill="#101014" stroke="url(#ring)" strokeWidth="1.2" />
            <path d="M15 3.5 Q20.5 6 20.5 12 Q20.5 16 18 18.5 L15 13Z" fill="#8b9196" />
            <path d="M4 9 Q6 4 9 4 L8 13 L5 15Z" fill="#33343a" />
            <ellipse cx="12" cy="10" rx="3.6" ry="4.8" fill="#3c2e2c" />
            <path d="M9 9 H15" stroke="#0a0a0a" strokeWidth="1.5" />
            <path d="M5.5 20 Q7 15.5 12 15.5 Q17 15.5 18.5 20 Q12 24 5.5 20Z" fill="#1b1c22" />
          </svg>
        </ProfileCell>
        <ControlCell><Stroke w={11} h={11} d="M1 1.5 H10 M1 5.5 H10 M1 9.5 H10" sw={1.1} /></ControlCell>
        <ControlCell><Stroke w={11} h={11} d="M1 9.5 H10" sw={1.1} /></ControlCell>
        <ControlCell><Stroke w={11} h={11} d="M4 3.5 V1 H10 V7 H7.5 M1 4 H7 V10 H1Z" sw={1.1} /></ControlCell>
        <ControlCell><Stroke w={11} h={11} d="M1 1 L10 10 M10 1 L1 10" sw={1.1} /></ControlCell>
      </WindowControls>
    </TabStrip>
  );
}

function Toolbar() {
  return (
    <ToolbarArea>
      <AddressRow>
        <NavCell $w={48} $pl={16}>
          <Stroke w={16} h={14} d="M14.5 7.5 H1.5 M7 2 L1.5 7.5 L7 13" sw={1.2} />
        </NavCell>
        <NavCell $w={44} $pl={12}>
          <Stroke w={16} h={18} d="M10.5 3.6 A6.3 6.3 0 1 0 14 8 M7.5 1 L10.8 3.8 L7.8 6.8" sw={1.2} />
        </NavCell>
        <AddressField>
          <svg width="16" height="16" viewBox="0 0 16 16" fill="none" stroke="#cfcfd4" strokeWidth="1.1">
            <circle cx="8" cy="8" r="7" />
            <ellipse cx="8" cy="8" rx="3.2" ry="7" />
            <path d="M1 8 H15 M2 5 H14 M2 11 H14" strokeWidth="0.9" />
          </svg>
          <span>localhost:5000</span>
          <PageTitle>- ToDoListApp.WebApp</PageTitle>
          <Stroke w={14} h={16} d="M1 1.5 H13 V15 L7 10.5 L1 15Z" color="#bdbdc2" />
        </AddressField>
        <AskButton>
          <svg width="16" height="17" viewBox="0 0 16 17" fill="none" stroke="#e05ac0" strokeWidth="1.6">
            <path d="M9.5 2 Q3 1 1.3 6 Q0.2 10 3 13 L2 16 H8 Q13.5 15.6 14.6 10" />
            <path d="M5.8 6.6 Q6.2 4.6 8 4.8 Q10 5.2 9.2 7.2 L7.6 9 V10 M7.4 12 V13" strokeWidth="1.4" />
            <path d="M13 1 V7 M10.2 4 H16" stroke="#fb4f83" strokeWidth="1.8" />
          </svg>
          <AskText>Спросить</AskText>
          <Dots />
        </AskButton>
        <VLine />
        <Extensions>
          <ControlCell>
            <svg width="20" height="20" viewBox="0 0 20 20">
              <path d="M10 0 L20 2 V7 Q20 15.5 10 20 Q0 15.5 0 7 V2Z" fill="#67b279" />
              <path d="M6 8.5 L9.2 12 L14.5 5.5" fill="none" stroke="#fff" strokeWidth="1.7" />
            </svg>
          </ControlCell>
          <ControlCell>
            <svg width="18" height="20" viewBox="0 0 18 20">
              <rect x="2" y="3" width="14" height="16" rx="1" fill="none" stroke="#000" strokeWidth="2" />
              <path d="M5.5 3 H7 L9 0.5 L11 3 H12.5 V6.5 H5.5Z" fill="#000" />
            </svg>
          </ControlCell>
          <ControlCell><VBadge>V</VBadge></ControlCell>
          <ControlCell>
            <svg width="9" height="10" viewBox="0 0 9 10">
              <path d="M0 8.5H2M3.4 8.5H5.4M6.8 8.5H8.8" stroke="#fff" strokeWidth="1.8" />
            </svg>
          </ControlCell>
          <ControlCell $w={45}>
            <Stroke w={19} h={18} sw={1.2} d="M4.5 17 L3 15.5 V9 Q0.8 7.8 0.8 4.8 V2 Q1 1 2 1 H8 Q9 1 9 2 V4.8 Q9 7.8 7 9 V15.5Z M9.5 4.5 V3 Q9.5 1.5 12 1.5 H14 Q15.5 1.5 15.5 3.5 V6 M9.5 6 H17 Q18 6 18 7 V13 Q18 14.5 17 14.5 H7.5 M8 10 H18 M4 3.5 H6" />
          </ControlCell>
          <ControlCell $w={44}>
            <Stroke w={14} h={16} d="M7 1 V11 M2.5 7 L7 11.5 L11.5 7 M1 15 H13" sw={1.2} />
          </ControlCell>
        </Extensions>
      </AddressRow>
      <BookmarkRow>
        <Bookmark>Вёрстка <Down /></Bookmark>
        <Bookmark>Полезные сайты <Down /></Bookmark>
        <Bookmark $gap={4}>
          <Glyph>
            <rect width="16" height="16" rx="1" fill="#5c9fc4" />
            <path d="M8 2 L9.5 4 L12 3 L12 5.5 L14 7.5 L12 9 L13 12 L10 11.5 L8.5 14 L7 11.5 L4 12.5 L4.5 9.5 L2 8 L4.5 6 L3.5 3.5 L6.5 4.2Z" fill="#fff" />
          </Glyph>
          <FadeText $w={110}>UI Router в Unity +</FadeText>
        </Bookmark>
        <Bookmark $gap={4}>
          <Glyph>
            <rect x="1" y="2" width="13" height="12" fill="none" stroke="#46566a" />
            <path d="M3.5 12 V4.5 L7.5 9 L11.5 4.5 V12" fill="none" stroke="#3d536b" strokeWidth="1.5" />
          </Glyph>
          <FadeText $w={112}>C# и .NET | Обобщ</FadeText>
        </Bookmark>
        <Bookmark $gap={4}>
          <Glyph>
            <path d="M5 1 L12 2 L16 6 L15 12 L8 15 L2 13 L0 7 L3 3Z" fill="#123f58" />
            <path d="M3 5 L8 8 L13 4 M4 11 L8 8 L12 12" stroke="#166f93" strokeWidth="1.2" fill="none" />
          </Glyph>
          <FadeText $w={114} $indent={-6} $fs={13} $ls={-0.2}>【Ado Official Shop</FadeText>
        </Bookmark>
        <Bookmark $gap={4}>
          <Glyph>
            <rect width="16" height="16" fill="#24b5ad" />
            <path d="M0 16 V9 L9 16Z M8 0 H16 V7Z" fill="#10726f" />
            <circle cx="8" cy="8" r="5.4" fill="#fff" />
            <path d="M10 5.5 H6.8 V10.5 H10 M6.8 8 H9.6" fill="none" stroke="#176d6d" strokeWidth="1.3" />
          </Glyph>
          <FadeText $w={114} $fs={13.1} $ls={-0.3}>Photo Editor Pixlr:</FadeText>
        </Bookmark>
      </BookmarkRow>
    </ToolbarArea>
  );
}

export default function App() {
  return (
    <Screen>
      <Global />
      <SystemBar />
      <Tabs />
      <Toolbar />
      <Page>
        <Sidebar>
          <Brand>
            <FaFeather size={32} />
            <BrandName>Capstone</BrandName>
          </Brand>
          <Account>
            <Avatar />
            <AccountName>anotherUser@gmail.com</AccountName>
            <AccountArrow>
              <Stroke w={10} h={16} d="M1.5 2 L8 8 L1.5 14" color="#6c757d" sw={2} />
            </AccountArrow>
          </Account>
          <NavList>
            {NAV.map((n) => (
              <NavItem key={n}>{n}</NavItem>
            ))}
          </NavList>
        </Sidebar>
        <Main>
          <Crumbs>
            <Stroke w={11} h={18} d="M9 1.5 L1.8 9 L9 16.5" sw={2.3} />
            <CrumbLink>TodoLists</CrumbLink>
            <Crumb>/</Crumb>
            <Crumb>Details</Crumb>
          </Crumbs>
          <Intro>
            <TitleRow>
              <Title>ADOmination! #5</Title>
              <IconButton $w={36}><FaPenToSquare size={20} /></IconButton>
              <IconButton $w={34} $bg="#dc3545" $fg="#fff"><FaTrashCan size={20} /></IconButton>
            </TitleRow>
            <Line $mt={5} $ls={0.24}>Ado-chan's music will be EVERYWHERE!!!!</Line>
            <Line $mt={16}>Created: <Muted $ls={0.23}>2025-05-12 07:27</Muted></Line>
            <Line $mt={16} $ls={0.08}>Owner: newemail@gmail.com</Line>
          </Intro>
          <Columns>
            <div>
              <PanelHead $bg="#6c757d">
                <PanelTitle $ls={-0.95}>Tasks:</PanelTitle>
                <SearchBox>
                  <FaMagnifyingGlass size={16} />
                  <SearchHint>Search todo list...</SearchHint>
                  <ClearSlot />
                </SearchBox>
                <FilterButton><FaSliders size={16} />Filter</FilterButton>
              </PanelHead>
              {TASKS.map(({ Icon, ...t }) => (
                <TaskRow key={t.name}>
                  <TaskCard $accent={t.accent}>
                    <TaskName>{t.name}</TaskName>
                    <Muted $ls={0.06}>{t.mail}</Muted>
                    <Priority $color={t.accent}>
                      <Muted>Priority:</Muted>
                      <Icon size={16} />
                      {t.label}
                    </Priority>
                    <Deadline>DeadLine: <Overdue>Overdue.</Overdue></Deadline>
                    <IconButton $w={34} $h={32}><FaEye size={18} /></IconButton>
                  </TaskCard>
                  <DoneButton disabled={t.done}><FaCheck size={16} /></DoneButton>
                </TaskRow>
              ))}
              <Pager>1</Pager>
            </div>
            <div>
              <PanelHead $bg="#198754">
                <PanelTitle $ls={-0.55}>Users:</PanelTitle>
                <InviteButton><FaUserPen size={18} />Invite</InviteButton>
              </PanelHead>
              <UsersCard>
                {USERS.map((u) => (
                  <UserRow key={u.name}>
                    <Avatar />
                    <UserText>
                      <UserName>{u.name}</UserName>
                      <UserMail>{u.mail}</UserMail>
                    </UserText>
                    <OwnerMark><Crown /></OwnerMark>
                  </UserRow>
                ))}
                <InvitesLink>Show invites</InvitesLink>
              </UsersCard>
            </div>
          </Columns>
        </Main>
      </Page>
      <CursorMark width="14" height="22" viewBox="0 0 14 22">
        <path d="M1 1 V17 L4.6 13.6 L7 19 L9.4 18 L7.2 12.8 H12Z" fill="#fff" stroke="#15151f" strokeWidth="1.1" />
      </CursorMark>
    </Screen>
  );
}
